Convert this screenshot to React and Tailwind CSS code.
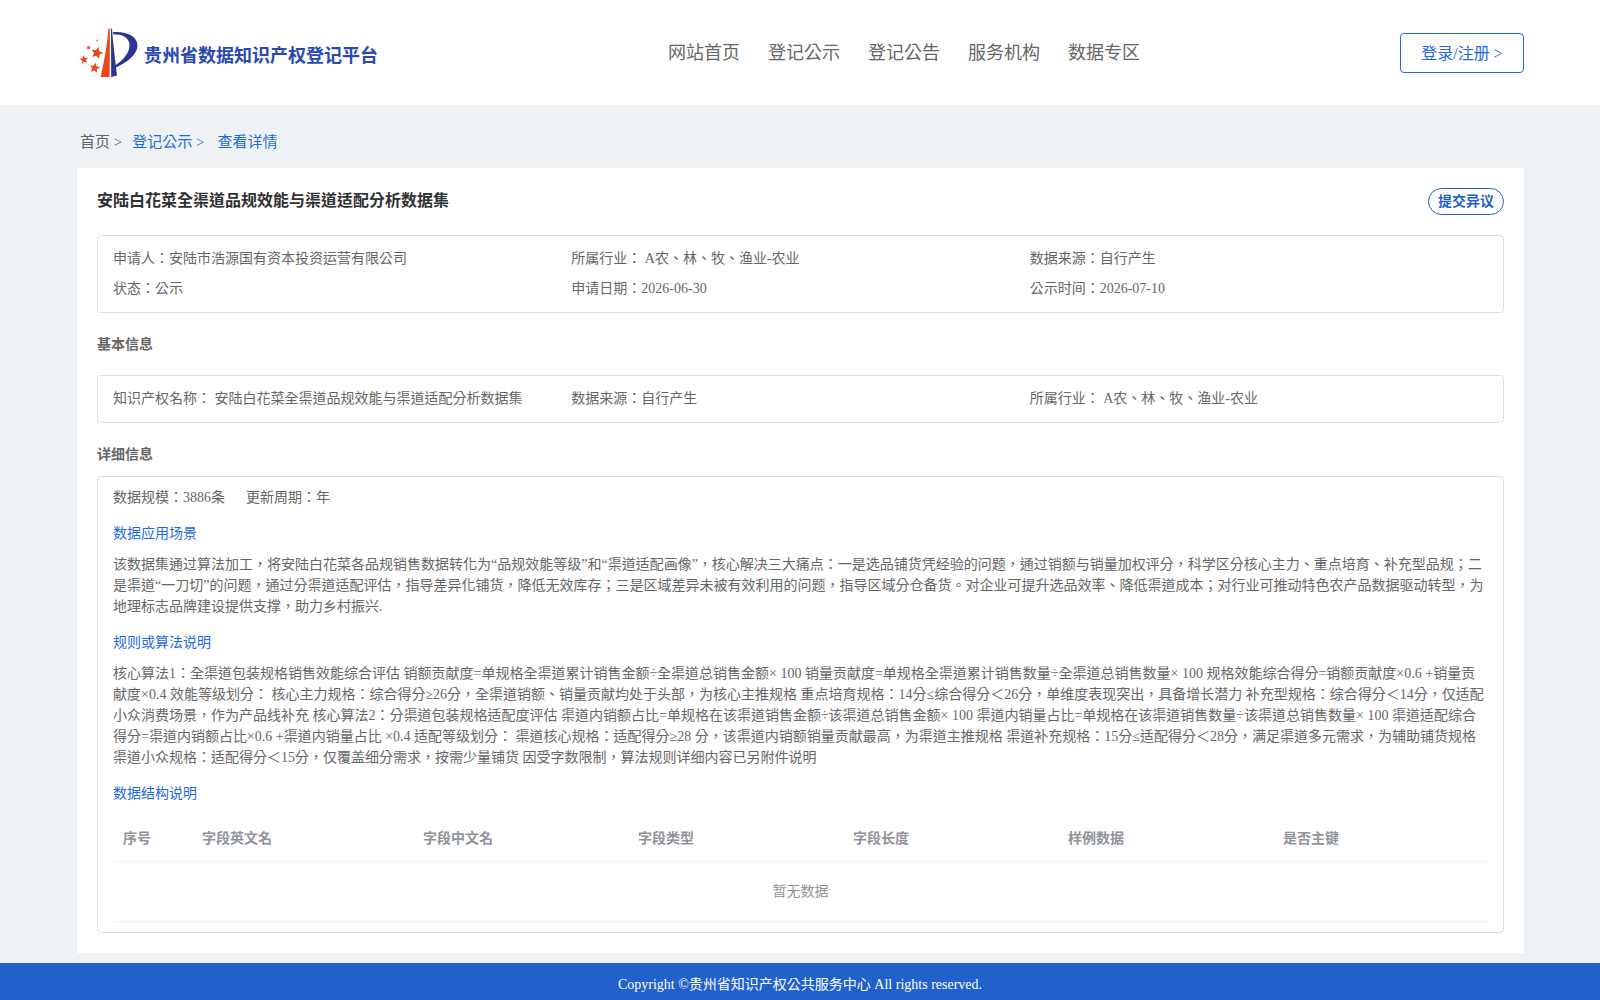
import React from "react";

// five pointed star, cx/cy centre, r outer radius, rot in degrees
const star = (cx, cy, r, rot = 0) => {
  const pts = [];
  for (let i = 0; i < 10; i++) {
    const rad = i % 2 === 0 ? r : r * 0.45;
    const a = ((rot - 90 + i * 36) * Math.PI) / 180;
    pts.push(`${(cx + rad * Math.cos(a)).toFixed(2)},${(cy + rad * Math.sin(a)).toFixed(2)}`);
  }
  return pts.join(" ");
};

const Logo = () => (
  <svg width="66" height="58" viewBox="0 0 66 58" className="shrink-0">
    <path d="M33.8 4.5 C34 20 33.8 38 33.6 53 L24.6 53 C28 38 31.5 20 32.4 4.5 Z" fill="#e8481c" />
    <path d="M35 4.5 L36 4.5 C37 20 39.5 38 41 51.5 L35.2 53 Z" fill="#2b3590" />
    <path d="M37 8 C52 7 61.5 13 61.5 21.5 C61.5 31 50 39 38.8 44 L38.2 42 C46 37 53.5 30 53.5 21 C53.5 15 47.5 10.5 41 10.5 L37.5 10.5 Z" fill="#2b3590" />
    <polygon points={star(21, 29, 6.4, 15)} fill="#e8481c" />
    <polygon points={star(8, 35.7, 4.4, -10)} fill="#e8481c" />
    <polygon points={star(18.7, 44, 5.4, 10)} fill="#e8481c" />
    <circle cx="12.7" cy="23.7" r="1.8" fill="#e9623a" />
    <circle cx="21.3" cy="16.7" r="1.1" fill="#ee8a6c" />
  </svg>
);

const Row3 = ({ items }) => (
  <div className="grid grid-cols-3">
    {items.map((t) => (
      <div key={t}>{t}</div>
    ))}
  </div>
);

const columns = [
  ["序号", "w-[79px]"],
  ["字段英文名", "w-[221px]"],
  ["字段中文名", "w-[215px]"],
  ["字段类型", "w-[215px]"],
  ["字段长度", "w-[215px]"],
  ["样例数据", "w-[215px]"],
  ["是否主键", "flex-1"],
];

export default function App() {
  return (
    <div className="min-h-[1000px] bg-[#eff2f5] font-['Liberation_Serif','Noto_Sans_CJK_TC',serif] text-[14px] text-[#666666]">
      {/* header */}
      <header className="flex h-[105px] items-center bg-white pl-[76px] pr-[76px]">
        <div className="flex w-[504px] items-center gap-[2px]">
          <Logo />
          <span className="mt-[8px] text-[18px] font-bold text-[#2a49b0]">贵州省数据知识产权登记平台</span>
        </div>
        <nav className="ml-[88px] flex flex-1 gap-[28px] text-[18px] leading-[28px] text-[#666666]">
          <a>网站首页</a>
          <a>登记公示</a>
          <a>登记公告</a>
          <a>服务机构</a>
          <a>数据专区</a>
        </nav>
        <button className="flex h-[40px] w-[124px] items-center justify-center rounded-[4px] border border-[#1f69e0] pt-[2px] text-[16px] text-[#1f69e0]">
          登录/注册 &gt;
        </button>
      </header>

      {/* breadcrumb */}
      <div className="flex h-[63px] items-center pl-[80px] pt-[12px] text-[15px]">
        <span className="text-[#606266]">首页 &gt;</span>
        <span className="ml-[10px] text-[#1f69e0]">登记公示 &gt;</span>
        <span className="ml-[13px] text-[#1f69e0]">查看详情</span>
      </div>

      {/* main card */}
      <main className="ml-[77px] mr-[76px] bg-white p-[20px]">
        <div className="flex h-[27px] items-start justify-between">
          <h1 className="pt-[1px] text-[16px] font-bold leading-[24px] text-[#303133]">安陆白花菜全渠道品规效能与渠道适配分析数据集</h1>
          <button className="flex h-[27px] w-[76px] items-center justify-center rounded-[14px] border border-[#1f5fcc] text-[14px] font-bold text-[#1f5fcc]">
            提交异议
          </button>
        </div>

        <div className="mt-[20px] rounded-[4px] border border-[#dcdfe6] px-[15px] py-[8px] leading-[30px]">
          <Row3 items={["申请人：安陆市浩源国有资本投资运营有限公司", "所属行业： A农、林、牧、渔业-农业", "数据来源：自行产生"]} />
          <Row3 items={["状态：公示", "申请日期：2026-06-30", "公示时间：2026-07-10"]} />
        </div>

        <h2 className="mt-[21px] text-[14px] font-bold leading-[22px]">基本信息</h2>

        <div className="mt-[19px] rounded-[4px] border border-[#dcdfe6] px-[15px] py-[8px] leading-[30px]">
          <Row3 items={["知识产权名称： 安陆白花菜全渠道品规效能与渠道适配分析数据集", "数据来源：自行产生", "所属行业： A农、林、牧、渔业-农业"]} />
        </div>

        <h2 className="mt-[21px] text-[14px] font-bold leading-[22px]">详细信息</h2>

        <div className="mt-[10px] rounded-[4px] border border-[#dcdfe6] px-[15px] py-[10px] leading-[21px]">
          <div className="flex gap-[21px]">
            <span>数据规模：3886条</span>
            <span>更新周期：年</span>
          </div>

          <h3 className="mt-[15px] text-[#1f69e0]">数据应用场景</h3>
          <p className="mt-[10px]">
            该数据集通过算法加工，将安陆白花菜各品规销售数据转化为“品规效能等级”和“渠道适配画像”，核心解决三大痛点：一是选品铺货凭经验的问题，通过销额与销量加权评分，科学区分核心主力、重点培育、补充型品规；二是渠道“一刀切”的问题，通过分渠道适配评估，指导差异化铺货，降低无效库存；三是区域差异未被有效利用的问题，指导区域分仓备货。对企业可提升选品效率、降低渠道成本；对行业可推动特色农产品数据驱动转型，为地理标志品牌建设提供支撑，助力乡村振兴.
          </p>

          <h3 className="mt-[15px] text-[#1f69e0]">规则或算法说明</h3>
          <p className="mt-[10px]">
            核心算法1：全渠道包装规格销售效能综合评估 销额贡献度=单规格全渠道累计销售金额÷全渠道总销售金额× 100 销量贡献度=单规格全渠道累计销售数量÷全渠道总销售数量× 100 规格效能综合得分=销额贡献度×0.6 +销量贡献度×0.4 效能等级划分： 核心主力规格：综合得分≥26分，全渠道销额、销量贡献均处于头部，为核心主推规格 重点培育规格：14分≤综合得分＜26分，单维度表现突出，具备增长潜力 补充型规格：综合得分＜14分，仅适配小众消费场景，作为产品线补充 核心算法2：分渠道包装规格适配度评估 渠道内销额占比=单规格在该渠道销售金额÷该渠道总销售金额× 100 渠道内销量占比=单规格在该渠道销售数量÷该渠道总销售数量× 100 渠道适配综合得分=渠道内销额占比×0.6 +渠道内销量占比 ×0.4 适配等级划分： 渠道核心规格：适配得分≥28 分，该渠道内销额销量贡献最高，为渠道主推规格 渠道补充规格：15分≤适配得分＜28分，满足渠道多元需求，为辅助铺货规格 渠道小众规格：适配得分＜15分，仅覆盖细分需求，按需少量铺货 因受字数限制，算法规则详细内容已另附件说明
          </p>

          <h3 className="mt-[15px] text-[#1f69e0]">数据结构说明</h3>

          {/* table */}
          <div className="mt-[10px]">
            <div className="flex h-[48px] items-center border-b border-[#ebeef5] pt-[2px] font-bold text-[#909399]">
              {columns.map(([label, w]) => (
                <div key={label} className={`${w} px-[10px]`}>{label}</div>
              ))}
            </div>
            <div className="flex h-[60px] items-center justify-center border-b border-[#ebeef5] text-[#909399]">暂无数据</div>
          </div>
        </div>
      </main>

      <footer className="mt-[10px] flex h-[37px] items-center justify-center bg-[#2260cc] pt-[6px] text-white">
        Copyright ©贵州省知识产权公共服务中心 All rights reserved.
      </footer>
    </div>
  );
}
